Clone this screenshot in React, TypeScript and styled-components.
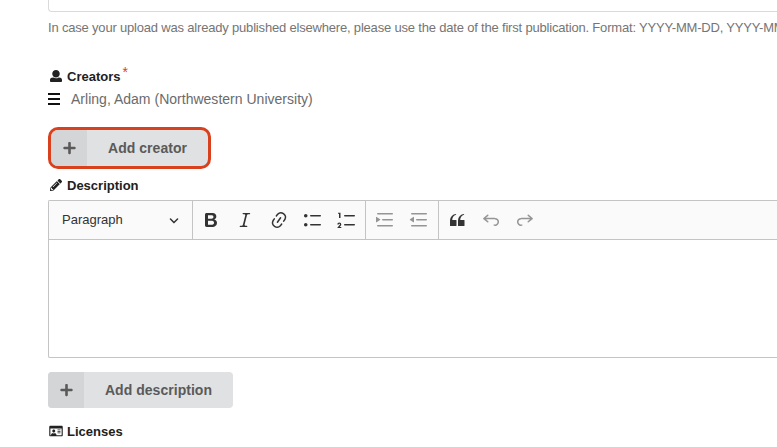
import React from "react";
import styled, { createGlobalStyle } from "styled-components";
import { FaPencilAlt, FaPlus, FaRegIdCard } from "react-icons/fa";

const GlobalStyle = createGlobalStyle`
  * { box-sizing: border-box; }
  body {
    margin: 0;
    overflow: hidden;
    background: #fff;
    font-family: "Liberation Sans", Arial, sans-serif;
    color: #212121;
  }
`;

const Page = styled.main`
  width: 100%;
  height: 447px;
  padding-left: 48px;
  overflow: hidden;
  display: flex;
  flex-direction: column;
  align-items: flex-start;
`;

const DateInput = styled.div`
  width: 100%;
  height: 12px;
  flex: none;
  border: 1px solid #d9dada;
  border-width: 0 0 1px 1px;
  border-radius: 0 0 0 4px;
`;

const HelpText = styled.p`
  margin: 7px 0 0;
  height: 18px;
  line-height: 18px;
  font-size: 13px;
  letter-spacing: -0.188px;
  white-space: nowrap;
  color: #757575;
`;

const FieldLabel = styled.div<{ $top: number }>`
  display: flex;
  align-items: center;
  gap: 4px;
  height: 18px;
  flex: none;
  margin-top: ${(p) => p.$top}px;
  padding-left: 1px;
  font-size: 13px;
  font-weight: 700;
  svg { width: 14px; height: 12px; flex: none; }
`;

const Required = styled.sup`
  align-self: flex-start;
  margin: -2px 0 0 -2px;
  font-size: 14px;
  font-weight: 400;
  line-height: 14px;
  color: #d23c3c;
`;

const CreatorRow = styled.div`
  display: flex;
  align-items: center;
  gap: 11px;
  height: 20px;
  margin-top: 4px;
  font-size: 14px;
  letter-spacing: 0.015px;
  color: #6b6b6b;
`;

const DragHandle = styled.span`
  display: flex;
  flex-direction: column;
  justify-content: space-between;
  width: 12px;
  height: 12px;
  margin-top: -1px;
  border: solid #111;
  border-width: 2px 0;
  &::before {
    content: "";
    height: 2px;
    margin: auto 0;
    background: #111;
  }
`;

const ActionButton = styled.button<{ $width: number; $top: number; $focused?: boolean }>`
  display: flex;
  flex: none;
  width: ${(p) => p.$width}px;
  height: ${(p) => (p.$focused ? 42 : 36)}px;
  margin: ${(p) => p.$top}px 0 0;
  padding: 0;
  overflow: hidden;
  border: ${(p) => (p.$focused ? "3px solid #d9411e" : "0")};
  border-radius: ${(p) => (p.$focused ? 10 : 4)}px;
  background: #e0e1e2;
  color: #5a5a5a;
  font: 700 14px "Liberation Sans", Arial, sans-serif;
  letter-spacing: 0.03px;
`;

const ButtonIcon = styled.span`
  display: flex;
  align-items: center;
  justify-content: center;
  width: 36px;
  height: 100%;
  background: #d4d5d6;
  svg { width: 13px; height: 14px; }
`;

const ButtonText = styled.span`
  flex: 1;
  align-self: center;
  text-align: center;
`;

const Editor = styled.section`
  width: 100%;
  height: 158px;
  flex: none;
  margin-top: 6px;
  border: 1px solid #c4c4c4;
  border-right: 0;
  border-radius: 2px 0 0 2px;
`;

const Toolbar = styled.div`
  display: flex;
  height: 39px;
  background: #fafafa;
  border-bottom: 1px solid #c4c4c4;
`;

const ToolGroup = styled.div<{ $width?: number; $pad: number }>`
  display: flex;
  align-items: center;
  gap: 14px;
  width: ${(p) => (p.$width ? `${p.$width}px` : "auto")};
  padding-left: ${(p) => p.$pad}px;
  border-right: ${(p) => (p.$width ? "1px solid #c4c4c4" : "0")};
`;

const HeadingPicker = styled(ToolGroup)`
  justify-content: space-between;
  padding-right: 13px;
  font-size: 13px;
  color: #333;
`;

const HeadingText = styled.span`
  padding-bottom: 2px;
`;

const ToolIcon = styled.svg<{ $disabled?: boolean }>`
  width: 20px;
  height: 20px;
  flex: none;
  fill: #333;
  opacity: ${(p) => (p.$disabled ? 0.5 : 1)};
`;

const Chevron = styled.svg`
  width: 10px;
  height: 10px;
  fill: #333;
`;

const UNDO =
  "m5.042 9.367 2.189 1.837a.75.75 0 0 1-.965 1.149l-3.788-3.18a.747.747 0 0 1-.21-.284.75.75 0 0 1 .17-.945L6.23 4.762a.75.75 0 1 1 .964 1.15L4.863 7.866h8.917A.75.75 0 0 1 14 7.9a4 4 0 1 1-1.477 7.718l.344-1.489a2.5 2.5 0 1 0 1.094-4.73l.008-.032H5.042z";
const LINES =
  "M2 3.75c0 .414.336.75.75.75h14.5a.75.75 0 1 0 0-1.5H2.75a.75.75 0 0 0-.75.75zm5 6c0 .414.336.75.75.75h9.5a.75.75 0 1 0 0-1.5h-9.5a.75.75 0 0 0-.75.75zM2.75 16.5h14.5a.75.75 0 1 0 0-1.5H2.75a.75.75 0 1 0 0 1.5z";

const paths = {
  bold: "M10.187 17H5.773c-.637 0-1.092-.138-1.364-.415-.273-.277-.409-.718-.409-1.323V4.738c0-.617.14-1.062.419-1.332.279-.27.73-.406 1.354-.406h4.68c.69 0 1.288.041 1.793.124.506.083.96.242 1.36.478.341.197.644.447.906.75a3.262 3.262 0 0 1 .808 2.162c0 1.401-.722 2.426-2.167 3.075C15.05 10.175 16 11.315 16 13.01a3.756 3.756 0 0 1-2.296 3.504 6.1 6.1 0 0 1-1.517.377c-.571.073-1.238.11-2 .11zm-.217-6.217H7v4.087h3.069c1.977 0 2.965-.69 2.965-2.072 0-.707-.256-1.22-.768-1.537-.512-.319-1.277-.478-2.296-.478zM7 5.13v3.619h2.606c.729 0 1.292-.067 1.69-.2a1.6 1.6 0 0 0 .91-.765c.165-.267.247-.566.247-.897 0-.707-.26-1.176-.778-1.409-.519-.232-1.31-.348-2.375-.348H7z",
  italic: "m9.586 14.633.021.004c-.036.335.095.655.393.962.082.083.173.15.274.201h1.474a.6.6 0 1 1 0 1.2H5.304a.6.6 0 0 1 0-1.2h1.15c.474-.07.809-.182 1.005-.334.157-.122.291-.32.404-.597l2.416-9.55a1.053 1.053 0 0 0-.281-.823 1.12 1.12 0 0 0-.442-.296H8.15a.6.6 0 0 1 0-1.2h6.443a.6.6 0 1 1 0 1.2h-1.195c-.376.056-.65.155-.823.296-.215.175-.423.439-.623.79l-2.366 9.347z",
  link: "m11.077 15 .991-1.416a.75.75 0 1 1 1.229.86l-1.148 1.64a.748.748 0 0 1-.217.206 5.251 5.251 0 0 1-8.503-5.955.741.741 0 0 1 .12-.274l1.147-1.639a.75.75 0 1 1 1.228.86L4.933 10.7l.006.003a3.75 3.75 0 0 0 6.132 4.294l.006.004zm5.494-5.335a.748.748 0 0 1-.12.274l-1.147 1.639a.75.75 0 1 1-1.228-.86l.86-1.23a3.75 3.75 0 0 0-6.144-4.301l-.86 1.229a.75.75 0 0 1-1.229-.86l1.148-1.64a.748.748 0 0 1 .217-.206 5.251 5.251 0 0 1 8.503 5.955zm-4.563-2.532a.75.75 0 0 1 .184 1.045l-3.155 4.505a.75.75 0 1 1-1.229-.86l3.155-4.506a.75.75 0 0 1 1.045-.184z",
  bullets: "M7 5.75c0 .414.336.75.75.75h9.5a.75.75 0 1 0 0-1.5h-9.5a.75.75 0 0 0-.75.75zm-6 0C1 4.784 1.777 4 2.75 4c.966 0 1.75.777 1.75 1.75 0 .966-.777 1.75-1.75 1.75C1.784 7.5 1 6.723 1 5.75zm6 9c0 .414.336.75.75.75h9.5a.75.75 0 1 0 0-1.5h-9.5a.75.75 0 0 0-.75.75zm-6 0c0-.966.777-1.75 1.75-1.75.966 0 1.75.777 1.75 1.75 0 .966-.777 1.75-1.75 1.75-.966 0-1.75-.777-1.75-1.75z",
  numbers: "M7 5.75c0 .414.336.75.75.75h9.5a.75.75 0 1 0 0-1.5h-9.5a.75.75 0 0 0-.75.75zM3.5 3v5H2V3.7H1v-1h2.5V3zM.343 17.857l2.59-3.257H2.92a.6.6 0 1 0-1.04 0H.302a2 2 0 1 1 3.995 0h-.001c-.048.405-.16.734-.333.988-.175.254-.59.692-1.244 1.312H4.3v1h-4l.043-.043zM7 14.75a.75.75 0 0 1 .75-.75h9.5a.75.75 0 1 1 0 1.5h-9.5a.75.75 0 0 1-.75-.75z",
  indent: LINES + "M1.632 6.95 5.02 9.358a.4.4 0 0 1-.013.661l-3.39 2.207A.4.4 0 0 1 1 11.892V7.275a.4.4 0 0 1 .632-.326z",
  outdent: LINES + "M4.368 6.95.98 9.358a.4.4 0 0 0 .013.661l3.39 2.207A.4.4 0 0 0 5 11.892V7.275a.4.4 0 0 0-.632-.326z",
  quote: "M3 10.423a6.5 6.5 0 0 1 6.056-6.408l.038.67C6.448 5.423 5.354 7.663 5.22 10H9c.552 0 .5.432.5.986v4.511c0 .554-.448.503-1 .503h-5c-.552 0-.5-.449-.5-1.003v-4.574zm8 0a6.5 6.5 0 0 1 6.056-6.408l.038.67c-2.646.739-3.74 2.979-3.873 5.315H17c.552 0 .5.432.5.986v4.511c0 .554-.448.503-1 .503h-5c-.552 0-.5-.449-.5-1.003v-4.574z",
  undo: UNDO,
};

function Tool({ name, disabled }: { name: keyof typeof paths | "redo"; disabled?: boolean }) {
  return (
    <ToolIcon viewBox="0 0 20 20" $disabled={disabled} aria-label={name}>
      {name === "redo" ? (
        <path d={UNDO} transform="translate(20 0) scale(-1 1)" />
      ) : (
        <path d={paths[name]} />
      )}
    </ToolIcon>
  );
}

function UserIcon() {
  return (
    <svg viewBox="0 0 512 512" fill="currentColor" aria-hidden>
      <path d="M256 0c88.366 0 160 71.634 160 160s-71.634 160-160 160S96 248.366 96 160 167.634 0 256 0zm183.283 333.821l-71.313-17.828c-74.923 53.89-165.738 41.864-223.94 0l-71.313 17.828C29.981 344.505 0 382.903 0 426.955V464c0 26.51 21.49 48 48 48h416c26.51 0 48-21.49 48-48v-37.045c0-44.052-29.981-82.45-72.717-93.134z" />
    </svg>
  );
}

export default function App() {
  return (
    <>
      <GlobalStyle />
      <Page>
        <DateInput />
        <HelpText>
          In case your upload was already published elsewhere, please use the date of the first
          publication. Format: YYYY-MM-DD, YYYY-MM
        </HelpText>
        <FieldLabel $top={30}>
          <UserIcon />
          Creators
          <Required>*</Required>
        </FieldLabel>
        <CreatorRow>
          <DragHandle />
          Arling, Adam (Northwestern University)
        </CreatorRow>
        <ActionButton $width={163} $top={18} $focused>
          <ButtonIcon><FaPlus /></ButtonIcon>
          <ButtonText>Add creator</ButtonText>
        </ActionButton>
        <FieldLabel $top={7}>
          <FaPencilAlt />
          Description
        </FieldLabel>
        <Editor>
          <Toolbar>
            <HeadingPicker $width={144} $pad={13}>
              <HeadingText>Paragraph</HeadingText>
              <Chevron viewBox="0 0 10 10">
                <path d="M.941 4.523a.75.75 0 1 1 1.06-1.06l3.006 3.005 3.005-3.005a.75.75 0 1 1 1.06 1.06l-3.549 3.55a.75.75 0 0 1-1.168-.136L.941 4.523z" />
              </Chevron>
            </HeadingPicker>
            <ToolGroup $width={173} $pad={8}>
              <Tool name="bold" />
              <Tool name="italic" />
              <Tool name="link" />
              <Tool name="bullets" />
              <Tool name="numbers" />
            </ToolGroup>
            <ToolGroup $width={73} $pad={9}>
              <Tool name="indent" disabled />
              <Tool name="outdent" disabled />
            </ToolGroup>
            <ToolGroup $pad={8}>
              <Tool name="quote" />
              <Tool name="undo" disabled />
              <Tool name="redo" disabled />
            </ToolGroup>
          </Toolbar>
        </Editor>
        <ActionButton $width={185} $top={14}>
          <ButtonIcon><FaPlus /></ButtonIcon>
          <ButtonText>Add description</ButtonText>
        </ActionButton>
        <FieldLabel $top={14}>
          <FaRegIdCard />
          Licenses
        </FieldLabel>
      </Page>
    </>
  );
}
